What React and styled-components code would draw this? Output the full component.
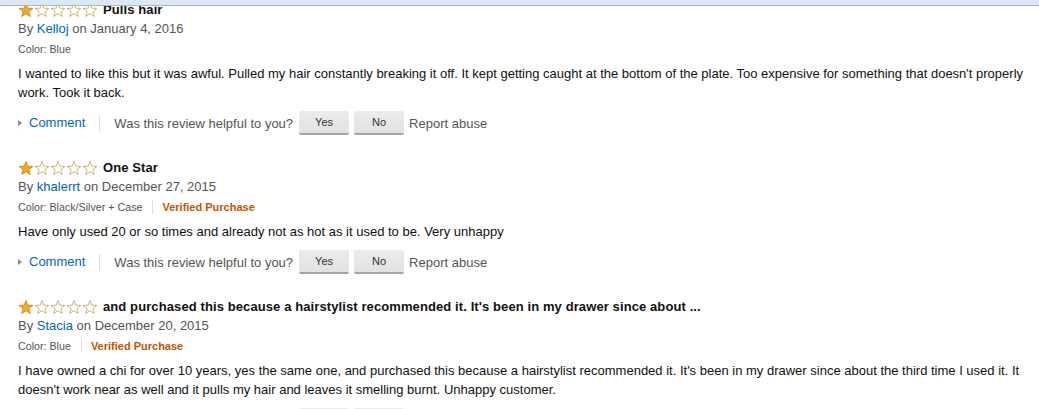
import React from 'react';
import styled, { createGlobalStyle } from 'styled-components';

const GlobalStyle = createGlobalStyle`
  body {
    margin: 0;
    background: #fff;
    font-family: "Liberation Sans", Arial, sans-serif;
    color: #111;
  }
`;

const TopBar = styled.div`
  position: fixed;
  top: 0;
  left: 0;
  right: 0;
  height: 5px;
  background-color: #dce8f6;
  border-bottom: 1px solid #a9b8c9;
  z-index: 2;
`;

const List = styled.div`
  padding: 0 9px 0 18px;
  width: 1012px;
`;

const ReviewWrapper = styled.div`
  margin-bottom: 23px;
`;

const Header = styled.div`
  display: flex;
  align-items: center;
  height: 19px;
  gap: 5px;
`;

const Stars = styled.span`
  display: flex;
  width: 80px;
`;

const Title = styled.span`
  font-size: 13px;
  font-weight: bold;
  letter-spacing: 0.1px;
  color: #111;
  white-space: nowrap;
`;

const Byline = styled.div`
  font-size: 13px;
  line-height: 20px;
  height: 20px;
  color: #555;

  a {
    color: #0066c0;
    text-decoration: none;
  }
`;

const Meta = styled.div`
  display: flex;
  align-items: center;
  height: 19px;
  font-size: 10.7px;
  color: #555;
`;

const Verified = styled.span`
  margin-left: 10px;
  padding-left: 9px;
  border-left: 1px solid #ddd;
  line-height: 14px;
  font-size: 11px;
  font-weight: bold;
  color: #c45500;
`;

const Body = styled.p`
  margin: 6px 0 0;
  font-size: 13px;
  line-height: 19px;
  color: #111;
`;

const Actions = styled.div`
  display: flex;
  align-items: center;
  height: 24px;
  margin-top: 9px;
  font-size: 13px;
  color: #555;
`;

const Caret = styled.span`
  width: 0;
  height: 0;
  border-top: 3.5px solid transparent;
  border-bottom: 3.5px solid transparent;
  border-left: 4px solid #888;
  margin-right: 7px;
`;

const CommentLink = styled.a`
  color: #0066c0;
  text-decoration: none;
  padding-right: 14px;
  border-right: 1px solid #ddd;
  line-height: 16px;
  margin-right: 14px;
`;

const VoteButton = styled.button`
  width: 50px;
  height: 24px;
  margin-right: 5px;
  padding: 0;
  border: 0;
  border-bottom: 2px solid #a4a4a4;
  border-radius: 2px;
  background: linear-gradient(#ececec, #e2e2e2);
  font-family: inherit;
  font-size: 11px;
  color: #333;
`;

const Helpful = styled.span`
  margin-right: 6px;
`;

const Star = ({ filled }) => (
  <svg width="16" height="14" viewBox="0 0 16 14">
    <polygon
      points="8,0.5 9.8,5.2 14.9,5.4 10.9,8.6 12.3,13.5 8,10.7 3.7,13.5 5.1,8.6 1.1,5.4 6.2,5.2"
      fill={filled ? '#f4ac1b' : '#fff'}
      stroke={filled ? '#d08a14' : '#c9a868'}
      strokeWidth="0.9"
      strokeLinejoin="round"
    />
  </svg>
);

const reviews = [
  {
    title: 'Pulls hair',
    author: 'Kelloj',
    date: 'January 4, 2016',
    color: 'Blue',
    verified: false,
    text:
      "I wanted to like this but it was awful. Pulled my hair constantly breaking it off. It kept getting caught at the bottom of the plate. Too expensive for something that doesn't properly work. Took it back.",
  },
  {
    title: 'One Star',
    author: 'khalerrt',
    date: 'December 27, 2015',
    color: 'Black/Silver + Case',
    verified: true,
    text: 'Have only used 20 or so times and already not as hot as it used to be. Very unhappy',
  },
  {
    title:
      "and purchased this because a hairstylist recommended it. It's been in my drawer since about ...",
    author: 'Stacia',
    date: 'December 20, 2015',
    color: 'Blue',
    verified: true,
    text:
      "I have owned a chi for over 10 years, yes the same one, and purchased this because a hairstylist recommended it. It's been in my drawer since about the third time I used it. It doesn't work near as well and it pulls my hair and leaves it smelling burnt. Unhappy customer.",
  },
];

const Review = ({ review }) => (
  <ReviewWrapper>
    <Header>
      <Stars>
        {[0, 1, 2, 3, 4].map((i) => (
          <Star key={i} filled={i === 0} />
        ))}
      </Stars>
      <Title>{review.title}</Title>
    </Header>
    <Byline>
      By <a href="#">{review.author}</a> on {review.date}
    </Byline>
    <Meta>
      <span>Color: {review.color}</span>
      {review.verified && <Verified>Verified Purchase</Verified>}
    </Meta>
    <Body>{review.text}</Body>
    <Actions>
      <Caret />
      <CommentLink href="#">Comment</CommentLink>
      <Helpful>Was this review helpful to you?</Helpful>
      <VoteButton>Yes</VoteButton>
      <VoteButton>No</VoteButton>
      <span>Report abuse</span>
    </Actions>
  </ReviewWrapper>
);

const App = () => (
  <>
    <GlobalStyle />
    <TopBar />
    <List>
      {reviews.map((review) => (
        <Review key={review.author} review={review} />
      ))}
    </List>
  </>
);

export default App;
